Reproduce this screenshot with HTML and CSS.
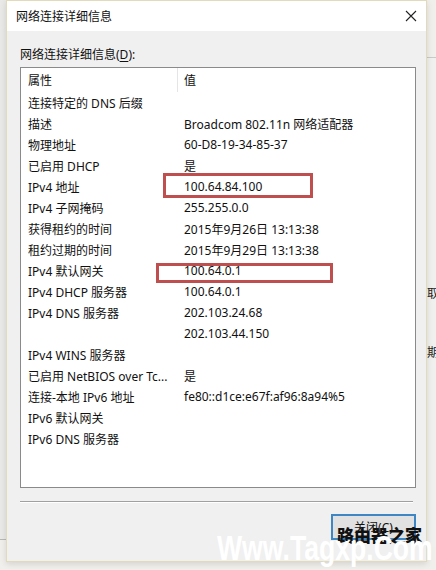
FILE: index.html
```html
<!DOCTYPE html>
<html lang="zh-CN">
<head>
    <meta charset="UTF-8">
    <meta name="viewport" content="width=device-width, initial-scale=1.0">
    <title>网络连接详细信息</title>
    <link rel="stylesheet" href="styles.css">
</head>
<body>
    <div class="desktop">
        <!-- windows behind the dialog -->
        <div class="back-left"></div>
        <div class="back-right">
            <span class="back-glyph glyph-1">取</span>
            <span class="back-glyph glyph-2">期</span>
        </div>

        <div class="dialog">
            <div class="titlebar">
                <span class="title">网络连接详细信息</span>
                <svg class="close-icon" viewBox="0 0 12 12">
                    <path d="M1 1L11 11M11 1L1 11"/>
                </svg>
            </div>

            <div class="dialog-body">
                <div class="field-label">网络连接详细信息(<u>D</u>):</div>

                <div class="details">
                    <div class="details-head">
                        <div class="col-prop">属性</div>
                        <div class="col-val">值</div>
                    </div>
                    <div class="row"><span class="col-prop">连接特定的 DNS 后缀</span><span class="col-val"></span></div>
                    <div class="row"><span class="col-prop">描述</span><span class="col-val">Broadcom 802.11n 网络适配器</span></div>
                    <div class="row"><span class="col-prop">物理地址</span><span class="col-val">60-D8-19-34-85-37</span></div>
                    <div class="row"><span class="col-prop">已启用 DHCP</span><span class="col-val">是</span></div>
                    <div class="row"><span class="col-prop">IPv4 地址</span><span class="col-val">100.64.84.100</span></div>
                    <div class="row"><span class="col-prop">IPv4 子网掩码</span><span class="col-val">255.255.0.0</span></div>
                    <div class="row"><span class="col-prop">获得租约的时间</span><span class="col-val">2015年9月26日 13:13:38</span></div>
                    <div class="row"><span class="col-prop">租约过期的时间</span><span class="col-val">2015年9月29日 13:13:38</span></div>
                    <div class="row"><span class="col-prop">IPv4 默认网关</span><span class="col-val">100.64.0.1</span></div>
                    <div class="row"><span class="col-prop">IPv4 DHCP 服务器</span><span class="col-val">100.64.0.1</span></div>
                    <div class="row"><span class="col-prop">IPv4 DNS 服务器</span><span class="col-val">202.103.24.68</span></div>
                    <div class="row"><span class="col-prop"></span><span class="col-val">202.103.44.150</span></div>
                    <div class="row"><span class="col-prop">IPv4 WINS 服务器</span><span class="col-val"></span></div>
                    <div class="row"><span class="col-prop">已启用 NetBIOS over Tc...</span><span class="col-val">是</span></div>
                    <div class="row"><span class="col-prop">连接-本地 IPv6 地址</span><span class="col-val">fe80::d1ce:e67f:af96:8a94%5</span></div>
                    <div class="row"><span class="col-prop">IPv6 默认网关</span><span class="col-val"></span></div>
                    <div class="row"><span class="col-prop">IPv6 DNS 服务器</span><span class="col-val"></span></div>

                    <!-- red highlight frames drawn over the list -->
                    <div class="mark mark-ip"></div>
                    <div class="mark mark-gw"></div>
                </div>

                <div class="separator"></div>

                <div class="actions">
                    <button class="btn-close">关闭(C)</button>
                </div>
            </div>
        </div>

        <div class="watermark-cn">路由器之家</div>
        <div class="watermark-en">Www.Tagxp.Com</div>
    </div>
</body>
</html>
```

FILE: styles.css
```css
* {
    margin: 0;
    padding: 0;
    box-sizing: border-box;
}

body {
    width: 436px;
    height: 570px;
    overflow: hidden;
    background: #f0efeb;
    font-family: 'Noto Sans', 'Noto Sans CJK SC', sans-serif;
    font-size: 12px;
    color: #111;
}

.desktop {
    position: relative;
    width: 436px;
    height: 570px;
    overflow: hidden;
}

.back-left {
    position: absolute;
    left: 0;
    top: 0;
    width: 10px;
    height: 540px;
    background: #e9e9e7;
    border-bottom: 1px solid #b8b8b4;
}

.back-right {
    position: absolute;
    left: 418px;
    top: 57px;
    width: 40px;
    height: 490px;
    border-top: 1px solid #c9c9c6;
    background: #f0f0ee;
}

.back-glyph {
    position: absolute;
    left: 9px;
    font-size: 12px;
    line-height: 14px;
    color: #222;
}

.glyph-1 {
    top: 229px;
}

.glyph-2 {
    top: 288px;
}

.dialog {
    position: relative;
    z-index: 1;
    margin-left: 6px;
    width: 421px;
    height: 562px;
    background: #f0f0f0;
    border: 1px solid #e2dbbb;
    box-shadow: 0 2px 6px rgba(0, 0, 0, 0.12);
    display: flex;
    flex-direction: column;
}

.titlebar {
    height: 30px;
    background: #fff;
    display: flex;
    align-items: center;
    justify-content: space-between;
    padding: 0 9px 0 9px;
}

.title {
    font-size: 12px;
    color: #111;
}

.close-icon {
    width: 12px;
    height: 12px;
    stroke: #222;
    stroke-width: 1.1;
    fill: none;
}

.dialog-body {
    padding: 0 10px 0 13px;
}

.field-label {
    margin-top: 16px;
    line-height: 16px;
}

.field-label u {
    text-decoration-thickness: 1px;
    text-underline-offset: 2px;
}

.details {
    position: relative;
    margin-top: 4px;
    width: 396px;
    height: 421px;
    background: #fff;
    border: 1px solid #8a8a8a;
}

.details-head {
    display: flex;
    height: 24px;
    align-items: center;
}

.details-head .col-prop {
    border-right: 1px solid #e5e5e5;
    height: 100%;
    display: flex;
    align-items: center;
}

.row {
    display: flex;
    height: 21px;
    align-items: center;
    white-space: nowrap;
}

.col-prop {
    width: 157px;
    padding-left: 7px;
    overflow: hidden;
}

.col-val {
    padding-left: 6px;
}

.mark {
    position: absolute;
    border: 3px solid #bf4f4f;
}

.mark-ip {
    left: 142px;
    top: 105px;
    width: 150px;
    height: 25px;
}

.mark-gw {
    left: 135px;
    top: 195px;
    width: 177px;
    height: 20px;
}

.separator {
    margin-top: 13px;
    width: 393px;
    height: 2px;
    border-top: 1px solid #a0a0a0;
    border-bottom: 1px solid #fff;
}

.actions {
    margin-top: 11px;
    display: flex;
    justify-content: flex-end;
}

.btn-close {
    width: 85px;
    height: 26px;
    background: #e1e1e1;
    border: 2px solid #3f86c4;
    font-family: 'Noto Sans', 'Noto Sans CJK SC', sans-serif;
    font-size: 12px;
    color: #111;
}

.watermark-cn {
    position: absolute;
    z-index: 2;
    left: 337px;
    top: 526px;
    font-family: 'Noto Sans CJK SC', sans-serif;
    font-size: 17px;
    line-height: 18px;
    font-weight: 900;
    color: #111;
}

.watermark-en {
    position: absolute;
    z-index: 3;
    left: 217px;
    top: 530px;
    font-family: 'Liberation Sans', Arial, sans-serif;
    font-size: 35px;
    line-height: 36px;
    font-weight: bold;
    color: #fff;
    transform: scaleX(0.76);
    transform-origin: left top;
    white-space: nowrap;
}
```
